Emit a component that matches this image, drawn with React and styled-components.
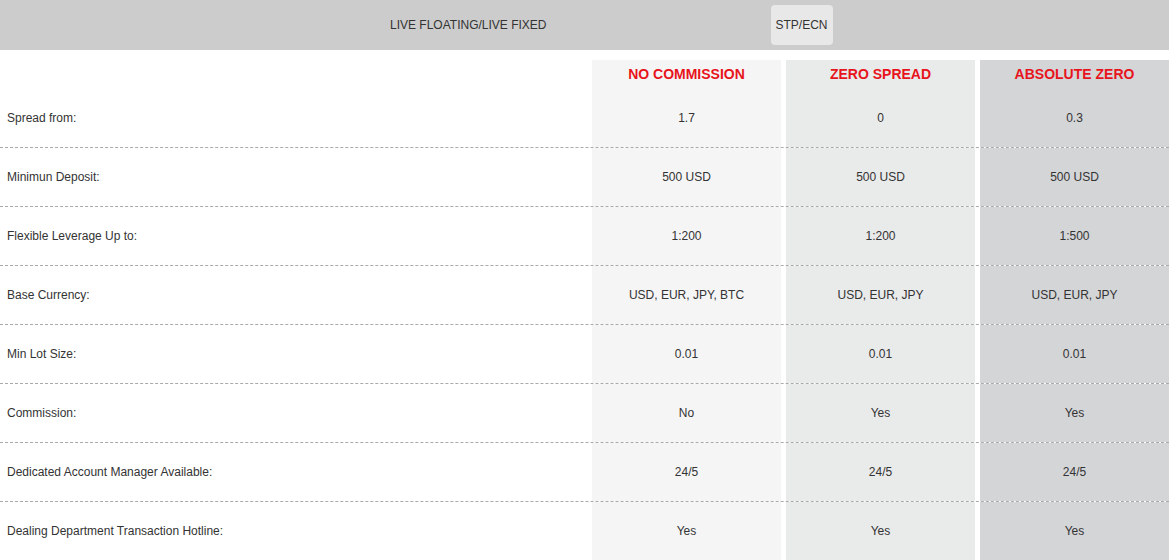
import React from "react";
import styled, { createGlobalStyle } from "styled-components";

const Global = createGlobalStyle`
  html, body { margin: 0; padding: 0; background: #fff; overflow: hidden; }
  body { font-family: "Liberation Sans", Arial, sans-serif; color: #333; }
`;

const Page = styled.div`
  width: 1169px;
  height: 560px;
  overflow: hidden;
`;

const TabBar = styled.div`
  height: 50px;
  background: #cccccc;
  display: flex;
  align-items: center;
  padding-left: 380px;
  box-sizing: border-box;
`;

const Tab = styled.button`
  font-family: inherit;
  font-size: 12px;
  color: #333;
  border: none;
  border-radius: 4px;
  background: ${(p) => (p.$active ? "#e8e8e8" : "transparent")};
  height: 40px;
  padding: 0 ${(p) => (p.$active ? "5px" : "10px")};
  margin-right: ${(p) => p.$gap || 0}px;
  margin-top: -1px;
  cursor: pointer;
`;

const Table = styled.div`
  margin-top: 10px;
`;

const Row = styled.div`
  display: grid;
  grid-template-columns: 587px 189px 189px 189px;
  column-gap: 5px;
  height: ${(p) => (p.$head ? 29 : 59)}px;
  border-bottom: ${(p) =>
    p.$head ? "none" : `1px dashed ${p.$line ? "#aaa" : "transparent"}`};
  box-sizing: border-box;
`;

const colBg = ["transparent", "#f5f5f5", "#e9eaea", "#d4d5d7"];

const Cell = styled.div`
  background: ${(p) => colBg[p.$col]};
  display: flex;
  align-items: center;
  justify-content: ${(p) => (p.$col === 0 ? "flex-start" : "center")};
  padding-left: ${(p) => (p.$col === 0 ? "7px" : "0")};
  font-size: 12px;
  color: #333;
`;

const HeadTitle = styled.div`
  color: #e8141c;
  font-weight: bold;
  font-size: 14px;
  margin-top: -2px;
`;

const heads = ["NO COMMISSION", "ZERO SPREAD", "ABSOLUTE ZERO"];

const rows = [
  ["Spread from:", "1.7", "0", "0.3"],
  ["Minimun Deposit:", "500 USD", "500 USD", "500 USD"],
  ["Flexible Leverage Up to:", "1:200", "1:200", "1:500"],
  ["Base Currency:", "USD, EUR, JPY, BTC", "USD, EUR, JPY", "USD, EUR, JPY"],
  ["Min Lot Size:", "0.01", "0.01", "0.01"],
  ["Commission:", "No", "Yes", "Yes"],
  ["Dedicated Account Manager Available:", "24/5", "24/5", "24/5"],
  ["Dealing Department Transaction Hotline:", "Yes", "Yes", "Yes"],
];

export default function App() {
  return (
    <Page>
      <Global />
      <TabBar>
        <Tab $gap={214}>LIVE FLOATING/LIVE FIXED</Tab>
        <Tab $active>STP/ECN</Tab>
      </TabBar>
      <Table>
        <Row $head>
          <Cell $col={0} />
          {heads.map((h, i) => (
            <Cell key={h} $col={i + 1}>
              <HeadTitle>{h}</HeadTitle>
            </Cell>
          ))}
        </Row>
        {rows.map((r, ri) => (
          <Row key={ri} $line={ri < rows.length - 1}>
            {r.map((v, ci) => (
              <Cell key={ci} $col={ci}>
                {v}
              </Cell>
            ))}
          </Row>
        ))}
      </Table>
    </Page>
  );
}
